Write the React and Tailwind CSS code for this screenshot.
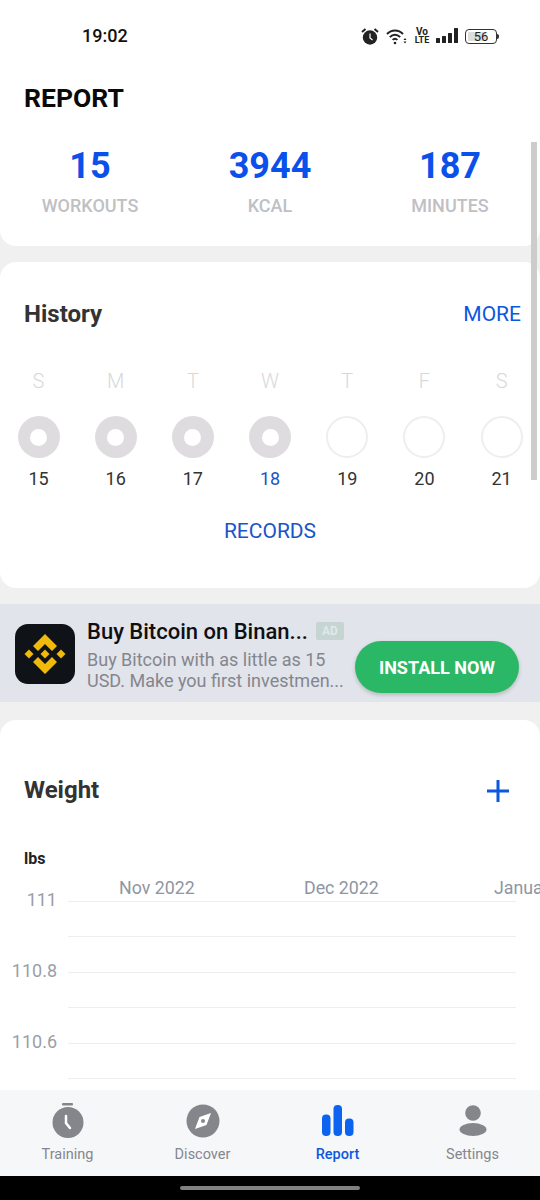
const days = [
  { d: "S", n: 15, done: true },
  { d: "M", n: 16, done: true },
  { d: "T", n: 17, done: true },
  { d: "W", n: 18, done: true, today: true },
  { d: "T", n: 19 },
  { d: "F", n: 20 },
  { d: "S", n: 21 },
];

function StatusBar() {
  return (
    <div className="h-[70px] bg-white flex items-start justify-between pt-[24px] pl-[82px] pr-[41px]">
      <span className="text-[18px] leading-[24px] text-[#111] font-medium">19:02</span>
      <div className="flex items-center gap-[8px] h-[24px]">
        <svg width="18" height="17" viewBox="0 0 18 17">
          <circle cx="9" cy="9.500" r="7.200" fill="#222" />
          <path d="M1 4 4.500 1M17 4 13.500 1" stroke="#222" strokeWidth="2" />
          <path d="M9 5.500V10L11.500 12" stroke="#fff" strokeWidth="1.200" fill="none" />
        </svg>
        <svg width="22" height="17" viewBox="0 0 22 17" fill="none" stroke="#222" strokeWidth="2" className="-ml-[1px]">
          <path d="M1 6C5.500 1.300 12.500 1.300 17 6" />
          <path d="M3.800 9.100C7 5.900 11 5.900 14.200 9.100" />
          <path d="M6.600 11.900C8 10.500 10 10.500 11.400 11.900" />
          <circle cx="9" cy="15" r="1.300" fill="#222" stroke="none" />
          <path d="M17.500 12 19 10 20.500 12H17.500M17.500 13.500 19 15.500 20.500 13.500H17.500" fill="#222" stroke="none" />
        </svg>
        <div className="flex flex-col items-center text-[10px] leading-[8px] font-bold text-[#222] w-[12px]">
          <span>Vo</span>
          <span className="text-[9px]">LTE</span>
        </div>
        <svg width="22" height="16" viewBox="0 0 22 16" fill="#222">
          <rect x="0" y="10" width="4" height="5" rx="0.500" />
          <rect x="6" y="8" width="4" height="7" rx="0.500" />
          <rect x="12" y="5" width="4" height="10" rx="0.500" />
          <rect x="18" y="0" width="4" height="15" rx="0.500" />
        </svg>
        <div className="flex items-center -ml-[1px]">
          <div className="relative w-[32px] h-[15px] rounded-[4px] border border-[#333] p-[2px] flex">
            <div className="w-[18px] h-full bg-[#ddd] rounded-[1px]" />
            <span className="absolute left-0 top-0 w-full text-center text-[13px] leading-[13px] text-[#222]">56</span>
          </div>
          <div className="w-[2px] h-[5px] bg-[#333] rounded-r-sm" />
        </div>
      </div>
    </div>
  );
}

function Stat({ value, label }) {
  return (
    <div className="flex flex-col items-center w-[180px]">
      <span className="text-[36px] leading-[42px] font-bold text-[#0a50ea]">{value}</span>
      <span className="mt-[8px] text-[18px] leading-[22px] font-medium text-[#c0c0c3]">{label}</span>
    </div>
  );
}

function Day({ d }) {
  return (
    <div className="flex flex-col items-center w-[42px]">
      <span className="text-[20px] leading-[24px] font-light text-[#d8d8da]">{d.d}</span>
      <div className="mt-[23px] w-[42px] h-[42px]">
        {d.done ? (
          <div className="w-full h-full rounded-full bg-[#dedcdf] flex items-center justify-center">
            <div className="w-[17px] h-[17px] rounded-full bg-white" />
          </div>
        ) : (
          <div className="w-full h-full rounded-full border-2 border-[#eeeeef]" />
        )}
      </div>
      <span className={`mt-[10px] text-[18px] leading-[22px] ${d.today ? "text-[#1a55c8]" : "text-[#333]"}`}>{d.n}</span>
    </div>
  );
}

function BinanceLogo() {
  return (
    <div className="mt-[2px] w-[60px] h-[60px] rounded-[13px] bg-[#0f1216] flex items-center justify-center shrink-0">
      <svg width="42" height="42" viewBox="0 0 42 42" fill="#f0b90b">
        <path d="M21 1 33 13 28 18 21 11 14 18 9 13Z" />
        <path d="M21 41 33 29 28 24 21 31 14 24 9 29Z" />
        <path d="M5 16.500 9.500 21 5 25.500 0.500 21Z" />
        <path d="M37 16.500 41.500 21 37 25.500 32.500 21Z" />
        <path d="M21 16.500 25.500 21 21 25.500 16.500 21Z" />
      </svg>
    </div>
  );
}

function Ad() {
  return (
    <div className="mt-[16px] h-[98px] bg-[#e1e4ea] flex items-center pl-[15px] pr-[21px]">
      <BinanceLogo />
      <div className="ml-[12px] w-[258px] shrink-0 mt-[2px]">
        <div className="flex items-center h-[30px] whitespace-nowrap">
          <span className="text-[22px] leading-[30px] font-medium text-[#0f0f12]">Buy Bitcoin on Binan...</span>
          <span className="ml-[8px] -mt-[3px] w-[28px] h-[18px] shrink-0 rounded-[2px] bg-[#c6d5d2] text-[12px] leading-[18px] font-bold text-center text-[#e1e8e8]">AD</span>
        </div>
        <div className="mt-[2px] text-[18px] leading-[21px] text-[#85868d] whitespace-nowrap">
          <div>Buy Bitcoin with as little as 15</div>
          <div>USD. Make you first investmen...</div>
        </div>
      </div>
      <button className="ml-auto mt-[28px] w-[164px] h-[52px] rounded-full bg-[#2bb866] text-white text-[18px] font-bold shadow-[0_2px_4px_rgba(0,0,0,0.2)]">
        INSTALL NOW
      </button>
    </div>
  );
}

function Chart() {
  const rows = ["111", "", "110.8", "", "110.6", ""];
  return (
    <div>
      <div className="mt-[43px] pl-[24px] text-[16px] leading-[20px] font-bold text-[#222]">lbs</div>
      <div className="mt-[9px] h-[20px] flex text-[17.800px] leading-[20px] text-[#8e96a2] whitespace-nowrap overflow-hidden">
        <span className="ml-[119px] w-[185px] shrink-0">Nov 2022</span>
        <span className="w-[190px] shrink-0">Dec 2022</span>
        <span className="w-[46px] overflow-hidden shrink-0">January</span>
      </div>
      <div className="mt-[3px] pr-[24px]">
        {rows.map((r, i) => (
          <div key={i} className="flex h-[35.400px]">
            <div className="w-[68px] pr-[11px] text-right text-[18px] leading-[20px] -mt-[11px] text-[#9a9fa8]">{r}</div>
            <div className="flex-1 border-t border-[#eeeef0]" />
          </div>
        ))}
      </div>
    </div>
  );
}

function NavItem({ label, active, children }) {
  return (
    <div className="flex-1 flex flex-col items-center">
      <div className="h-[38px] flex items-end justify-center">{children}</div>
      <span className={`mt-[7px] text-[14.500px] leading-[20px] ${active ? "text-[#0b57e0] font-medium" : "text-[#85868c]"}`}>{label}</span>
    </div>
  );
}

function BottomNav() {
  return (
    <div className="h-[86px] bg-[#f6f7f9] flex items-start pt-[10px] shrink-0">
      <NavItem label="Training">
        <svg width="32" height="35" viewBox="0 0 32 35">
          <rect x="10" y="0" width="11" height="2.500" rx="1" fill="#85868c" />
          <circle cx="16" cy="19.500" r="15.500" fill="#85868c" />
          <path d="M14 13V20L18 25" stroke="#fff" strokeWidth="2.500" fill="none" strokeLinecap="round" />
        </svg>
      </NavItem>
      <NavItem label="Discover">
        <svg width="34" height="34" viewBox="0 0 34 34">
          <circle cx="17" cy="17" r="16.500" fill="#85868c" />
          <path d="M25 9 20.500 21 9 25 13.500 13Z" fill="#fff" />
          <circle cx="17" cy="17" r="2" fill="#85868c" />
        </svg>
      </NavItem>
      <NavItem label="Report" active>
        <svg width="32" height="31" viewBox="0 0 32 31" fill="#0b63f0" className="mb-[2px]">
          <rect x="0" y="9.500" width="8.500" height="21.500" rx="4" />
          <rect x="11.500" y="0" width="8.500" height="31" rx="4" />
          <rect x="23" y="13.500" width="8.500" height="17.500" rx="4" />
        </svg>
      </NavItem>
      <NavItem label="Settings">
        <svg width="28" height="31" viewBox="0 0 28 31" fill="#85868c" className="mb-[2px]">
          <circle cx="14" cy="8" r="7.800" />
          <ellipse cx="14" cy="24.500" rx="13.500" ry="6.500" />
        </svg>
      </NavItem>
    </div>
  );
}

export default function App() {
  return (
    <div className="relative w-[540px] h-[1200px] flex flex-col overflow-hidden bg-[#f0f0f0] font-['Roboto',sans-serif]">
      <div className="flex-1 overflow-hidden min-h-0">
        <div className="bg-white rounded-b-[16px] h-[246px]">
          <StatusBar />
          <div className="pl-[24px] text-[26.500px] leading-[32px] font-bold text-[#0a0a0a] mt-[12px]">REPORT</div>
          <div className="flex mt-[31px]">
            <Stat value="15" label="WORKOUTS" />
            <Stat value="3944" label="KCAL" />
            <Stat value="187" label="MINUTES" />
          </div>
        </div>

        <div className="mt-[16px] h-[326px] bg-white rounded-[16px]">
          <div className="flex items-center justify-between pt-[36px] pl-[24px] pr-[19px]">
            <span className="text-[24px] leading-[32px] font-bold text-[#333]">History</span>
            <span className="text-[21px] leading-[32px] text-[#0b57e0]">MORE</span>
          </div>
          <div className="mt-[39px] pl-[17.500px] flex gap-[35.200px]">
            {days.map((d, i) => (
              <Day key={i} d={d} />
            ))}
          </div>
          <div className="mt-[27px] text-center text-[21px] leading-[28px] text-[#1a55c8]">RECORDS</div>
        </div>

        <Ad />

        <div className="mt-[18px] bg-white rounded-t-[16px] h-[400px]">
          <div className="flex items-center justify-between pt-[54px] pl-[24px] pr-[30px]">
            <span className="text-[24px] leading-[32px] font-bold text-[#333]">Weight</span>
            <svg width="24" height="24" viewBox="0 0 24 24" stroke="#0b57e0" strokeWidth="3" className="mt-[1px]">
              <path d="M12 1V23M1 12H23" />
            </svg>
          </div>
          <Chart />
        </div>
      </div>

      <BottomNav />
      <div className="h-[24px] bg-black flex items-center justify-center shrink-0">
        <div className="w-[180px] h-[4px] rounded-full bg-[#808080]" />
      </div>

      <div className="absolute left-[531px] top-[142px] w-[6px] h-[338px] bg-[#cccccc]" />
    </div>
  );
}
